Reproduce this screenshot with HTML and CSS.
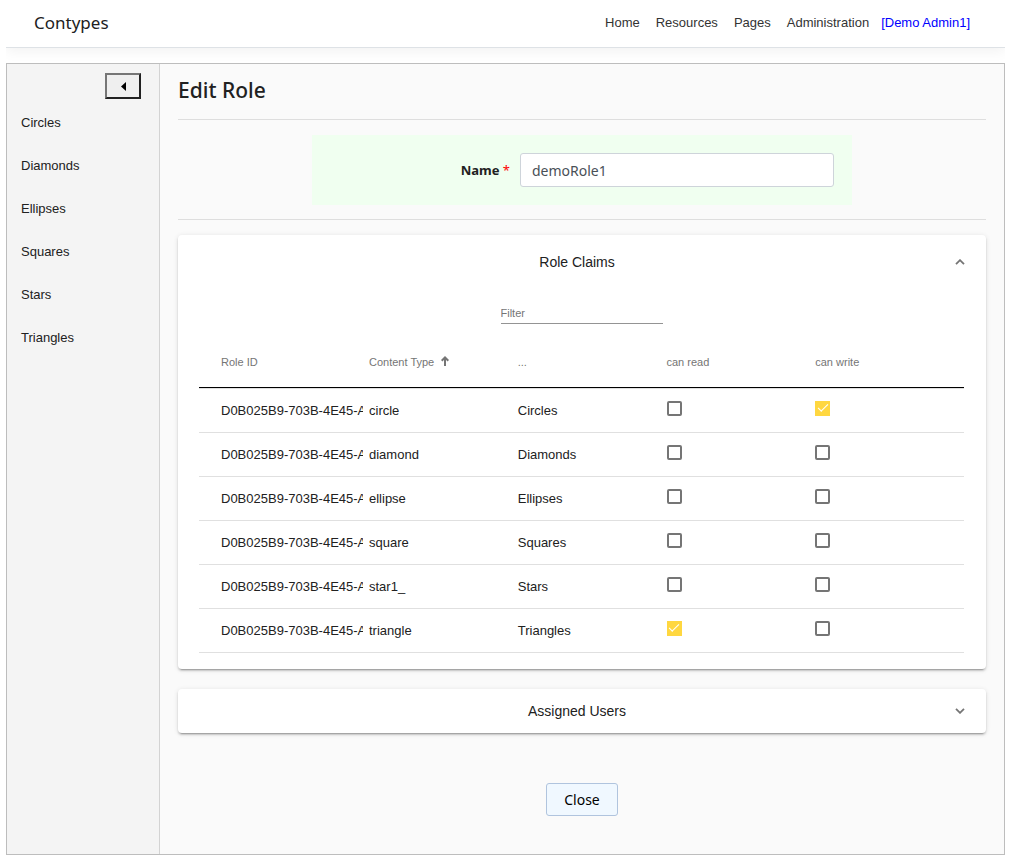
FILE: index.html
```html
<!DOCTYPE html>
<html lang="en">
<head>
  <meta charset="UTF-8" />
  <meta name="viewport" content="width=device-width, initial-scale=1.0" />
  <title>Contypes</title>
  <link rel="stylesheet" href="styles.css">
</head>
<body>

  <header class="navbar">
    <a class="brand" href="#">Contypes</a>
    <nav class="nav-links">
      <a href="#">Home</a>
      <a href="#">Resources</a>
      <a href="#">Pages</a>
      <a href="#">Administration</a>
      <a class="user" href="#">[Demo Admin1]</a>
    </nav>
  </header>

  <div class="shell">
    <aside class="sidebar">
      <button type="button" class="collapse" aria-label="Collapse menu">
        <svg width="5" height="9" viewBox="0 0 5 9"><path d="M5 0v9L0 4.5z" fill="#000"/></svg>
      </button>
      <nav class="side-links">
        <a href="#">Circles</a>
        <a href="#">Diamonds</a>
        <a href="#">Ellipses</a>
        <a href="#">Squares</a>
        <a href="#">Stars</a>
        <a href="#">Triangles</a>
      </nav>
    </aside>

    <main class="content">
      <h1>Edit Role</h1>
      <hr>
      <form class="name-form">
        <label for="name">Name <span class="required">*</span></label>
        <input type="text" id="name" value="demoRole1" required>
      </form>
      <hr>

      <section class="panel">
        <button type="button" class="panel-header open" aria-expanded="true">
          <span class="panel-title">Role Claims</span>
          <svg class="chevron" viewBox="0 0 10 6"><path d="M1 5.2l4-4 4 4" fill="none" stroke="#757575" stroke-width="1.8"/></svg>
        </button>
        <div class="panel-body">
          <input type="text" class="filter" placeholder="Filter" aria-label="Filter">
          <table>
            <thead>
              <tr>
                <th class="first">Role ID</th>
                <th>Content Type
                  <svg class="sort" viewBox="0 0 8 10"><path d="M4 10V1.5M.7 4.8L4 1.5l3.3 3.3" fill="none" stroke="#757575" stroke-width="2"/></svg>
                </th>
                <th>...</th>
                <th>can read</th>
                <th>can write</th>
              </tr>
            </thead>
            <tbody>
              <tr>
                <td class="first"><div class="clip">D0B025B9-703B-4E45-A</div></td>
                <td>circle</td>
                <td>Circles</td>
                <td><input type="checkbox" aria-label="circle can read"></td>
                <td><input type="checkbox" aria-label="circle can write" checked></td>
              </tr>
              <tr>
                <td class="first"><div class="clip">D0B025B9-703B-4E45-A</div></td>
                <td>diamond</td>
                <td>Diamonds</td>
                <td><input type="checkbox" aria-label="diamond can read"></td>
                <td><input type="checkbox" aria-label="diamond can write"></td>
              </tr>
              <tr>
                <td class="first"><div class="clip">D0B025B9-703B-4E45-A</div></td>
                <td>ellipse</td>
                <td>Ellipses</td>
                <td><input type="checkbox" aria-label="ellipse can read"></td>
                <td><input type="checkbox" aria-label="ellipse can write"></td>
              </tr>
              <tr>
                <td class="first"><div class="clip">D0B025B9-703B-4E45-A</div></td>
                <td>square</td>
                <td>Squares</td>
                <td><input type="checkbox" aria-label="square can read"></td>
                <td><input type="checkbox" aria-label="square can write"></td>
              </tr>
              <tr>
                <td class="first"><div class="clip">D0B025B9-703B-4E45-A</div></td>
                <td>star1_</td>
                <td>Stars</td>
                <td><input type="checkbox" aria-label="star1_ can read"></td>
                <td><input type="checkbox" aria-label="star1_ can write"></td>
              </tr>
              <tr>
                <td class="first"><div class="clip">D0B025B9-703B-4E45-A</div></td>
                <td>triangle</td>
                <td>Triangles</td>
                <td><input type="checkbox" aria-label="triangle can read" checked></td>
                <td><input type="checkbox" aria-label="triangle can write"></td>
              </tr>
            </tbody>
          </table>
        </div>
      </section>

      <section class="panel">
        <button type="button" class="panel-header" aria-expanded="false">
          <span class="panel-title">Assigned Users</span>
          <svg class="chevron" viewBox="0 0 10 6"><path d="M1 .8l4 4 4-4" fill="none" stroke="#757575" stroke-width="1.8"/></svg>
        </button>
      </section>

      <div class="actions">
        <button type="button" class="close">Close</button>
      </div>
    </main>
  </div>

</body>
</html>
```
FILE: styles.css
```css
* {
  box-sizing: border-box;
}

body {
  margin: 0 6px;
  background: #fff;
  color: #212121;
  font-family: Arial, "Liberation Sans", sans-serif;
  font-size: 13px;
}

a {
  color: inherit;
  text-decoration: none;
}

.navbar {
  display: flex;
  justify-content: space-between;
  align-items: center;
  height: 48px;
  padding: 0 35px 2px 28px;
  border-bottom: 1px solid #dee2e6;
  box-shadow: 0 4px 12px rgba(0, 0, 0, 0.05);
}

.brand {
  font-family: "Noto Sans", sans-serif;
  font-size: 17px;
}

.nav-links {
  display: flex;
  gap: 16px;
  color: #333;
}

.nav-links .user {
  margin-left: -4px;
  color: #00f;
}

.shell {
  display: flex;
  min-height: 792px;
  margin-top: 15px;
  border: 1px solid #bdbdbd;
  background: #fafafa;
}

.sidebar {
  display: flex;
  flex-direction: column;
  width: 153px;
  flex-shrink: 0;
  padding-top: 9px;
  border-right: 1px solid #d3d3d3;
  background: #f4f4f4;
}

.collapse {
  display: flex;
  justify-content: center;
  align-items: center;
  align-self: flex-end;
  width: 36px;
  height: 26px;
  margin-right: 18px;
  padding: 0;
  border: 2px solid;
  border-color: #767676 #212121 #212121 #767676;
  background: #efefef;
}

.side-links a {
  display: block;
  padding: 14px;
  line-height: 15px;
}

.side-links {
  padding-top: 2px;
}

.content {
  flex: 1;
  min-width: 0;
  padding: 10px 18px;
}

h1 {
  margin: 0 0 13px;
  font-family: "Noto Sans", sans-serif;
  font-size: 21px;
  font-weight: 500;
  line-height: 32px;
}

hr {
  height: 1px;
  margin: 0 0 15px;
  border: 0;
  background: #dedede;
}

.name-form {
  display: flex;
  justify-content: flex-end;
  align-items: center;
  gap: 10px;
  max-width: 540px;
  margin: 0 auto 14px;
  padding: 18px;
  background: #f0fff0;
}

.name-form label {
  font-family: "Noto Sans", sans-serif;
  font-size: 13px;
  font-weight: bold;
}

.required {
  color: #f00;
  font-weight: normal;
}

.name-form input {
  width: 314px;
  height: 34px;
  padding: 0 11px;
  border: 1px solid #ced4da;
  border-radius: 3px;
  background: #fff;
  color: #495057;
  font-family: "Noto Sans", sans-serif;
  font-size: 14px;
}

.panel {
  margin-bottom: 20px;
  border-radius: 4px;
  background: #fff;
  box-shadow: 0 3px 1px -2px rgba(0, 0, 0, 0.2), 0 2px 2px rgba(0, 0, 0, 0.14), 0 1px 5px rgba(0, 0, 0, 0.12);
}

.panel-header {
  display: flex;
  align-items: center;
  width: 100%;
  height: 44px;
  padding: 0 21px;
  border: 0;
  background: none;
  color: #212121;
  font-family: inherit;
  font-size: 14px;
  cursor: pointer;
}

.panel-header.open {
  height: 54px;
}

.panel-title {
  flex: 1;
}

.chevron {
  width: 10px;
  height: 6px;
}

.panel-body {
  padding: 14px 22px 16px 21px;
}

.filter {
  display: block;
  width: 162px;
  height: 21px;
  margin: 0 auto 13px;
  padding: 0 0 1px;
  border: 0;
  border-bottom: 1px solid #949494;
  background: none;
  font-family: inherit;
  font-size: 11px;
}

.filter::placeholder {
  color: #757575;
}

table {
  width: 100%;
  table-layout: fixed;
  border-collapse: separate;
  border-spacing: 0;
}

th,
td {
  padding: 0;
  text-align: left;
}

th {
  height: 51px;
  border-bottom: 1px solid #000;
  color: #757575;
  font-size: 11px;
  font-weight: normal;
}

.first {
  width: 170px;
  padding-left: 22px;
}

.sort {
  width: 8px;
  height: 10px;
  margin-left: 4px;
}

td {
  height: 44px;
  border-bottom: 1px solid #e0e0e0;
}

tbody tr:first-child td {
  height: 45px;
  border-top: 1px solid #e0e0e0;
}

.clip {
  margin-right: 6px;
  overflow: hidden;
  white-space: nowrap;
}

td input {
  display: grid;
  place-items: center;
  width: 15px;
  height: 15px;
  margin: 0 0 4px;
  appearance: none;
  border: 2px solid #757575;
  border-radius: 2px;
  background: #fff;
}

td input:checked {
  border: 0;
  border-radius: 0;
  background: #ffd740;
}

td input:checked::before {
  content: "";
  width: 9px;
  height: 4px;
  margin-bottom: 4px;
  border: solid #fff;
  border-width: 0 0 1px 1px;
  transform: rotate(-45deg);
}

.actions {
  display: flex;
  justify-content: center;
  padding-top: 30px;
}

.close {
  width: 72px;
  height: 33px;
  border: 1px solid #b0c4de;
  border-radius: 3px;
  background: #f0f8ff;
  color: #000;
  font-family: "Noto Sans", sans-serif;
  font-size: 14px;
}
```
